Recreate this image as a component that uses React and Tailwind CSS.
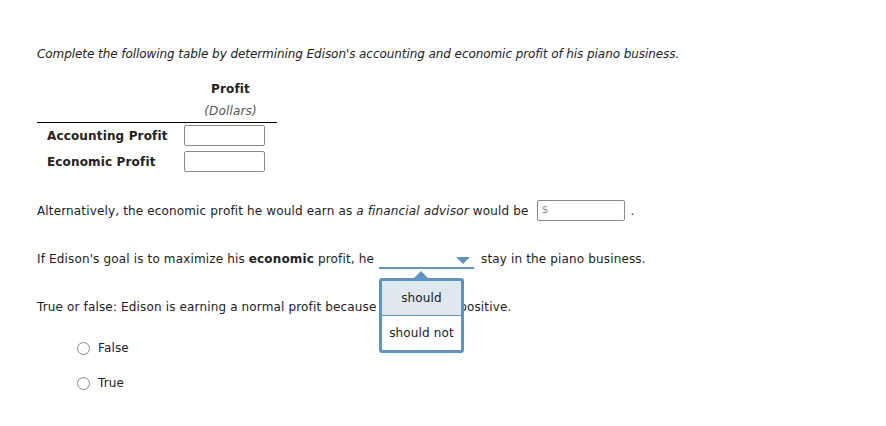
import React from 'react'

const font = { fontFamily: '"DejaVu Sans", Verdana, sans-serif' }

const Radio = ({ label }) => (
  <label className="flex items-center gap-[8px] text-[12px] text-[#222] leading-[15px]">
    <span className="w-[13px] h-[13px] rounded-full border border-[#8a8a8a] bg-white"></span>
    <span>{label}</span>
  </label>
)

const App = () => {
  return (
    <div className="w-[886px] h-[426px] bg-white text-[12px] text-[#222] tracking-[0.15px] pl-[37px] pt-[47px]" style={font}>
      <p className="italic leading-[15px] tracking-[-0.07px]">
        Complete the following table by determining Edison's accounting and economic profit of his piano business.
      </p>

      <div className="mt-[20px] w-[240px]">
        <div className="flex">
          <div className="w-[147px]"></div>
          <div className="flex-1 text-center">
            <div className="font-bold leading-[15px]">Profit</div>
            <div className="italic text-[#555] leading-[15px] mt-[7px]">(Dollars)</div>
          </div>
        </div>
        <div className="border-t border-black mt-[3px]">
          <div className="flex items-center h-[21px] mt-[2px]">
            <div className="w-[147px] font-bold pl-[10px]">Accounting Profit</div>
            <input className="w-[81px] h-[21px] border border-[#8a8a8a] rounded-[2px]" />
          </div>
          <div className="flex items-center h-[21px] mt-[5px]">
            <div className="w-[147px] font-bold pl-[10px]">Economic Profit</div>
            <input className="w-[81px] h-[21px] border border-[#8a8a8a] rounded-[2px]" />
          </div>
        </div>
      </div>

      <div className="mt-[28px] flex items-center h-[21px]">
        <span>Alternatively, the economic profit he would earn as <i>a financial advisor</i> would be</span>
        <div className="ml-[9px] w-[88px] h-[21px] border border-[#8a8a8a] rounded-[2px] flex items-center pl-[3px] text-[#999] text-[11px]">$</div>
        <span className="ml-[5px]">.</span>
      </div>

      <div className="mt-[28px] flex items-start h-[21px]">
        <span className="leading-[21px]">If Edison's goal is to maximize his <b>economic</b> profit, he</span>
        <div className="relative ml-[5px] w-[95px] h-[20px] border-b-2 border-[#5b95c6]">
          <span className="absolute right-[4px] top-[8px] w-0 h-0 border-l-[7px] border-r-[7px] border-t-[7px] border-l-transparent border-r-transparent border-t-[#5b95c6]"></span>
          <div className="absolute left-0 top-[29px] z-10">
            <span className="absolute left-[35px] -top-[7px] w-0 h-0 border-l-[7px] border-r-[7px] border-b-[7px] border-l-transparent border-r-transparent border-b-[#5b95c6]"></span>
            <div className="w-[85px] border-[3px] border-[#5b95c6] rounded-[3px] bg-white">
              <div className="h-[35px] flex items-center justify-center bg-[#dfe8ec] border-b border-[#5b95c6] text-[12px]">should</div>
              <div className="h-[34px] flex items-center justify-center text-[12px]">should not</div>
            </div>
          </div>
        </div>
        <span className="ml-[7px] leading-[21px]">stay in the piano business.</span>
      </div>

      <p className="mt-[30px] leading-[15px]">
        True or false: Edison is earning a normal profit because the profit is <span className="ml-[4px]">positive.</span>
      </p>

      <div className="mt-[26px] pl-[40px] flex flex-col gap-[20px]">
        <Radio label="False" />
        <Radio label="True" />
      </div>
    </div>
  )
}

export default App
